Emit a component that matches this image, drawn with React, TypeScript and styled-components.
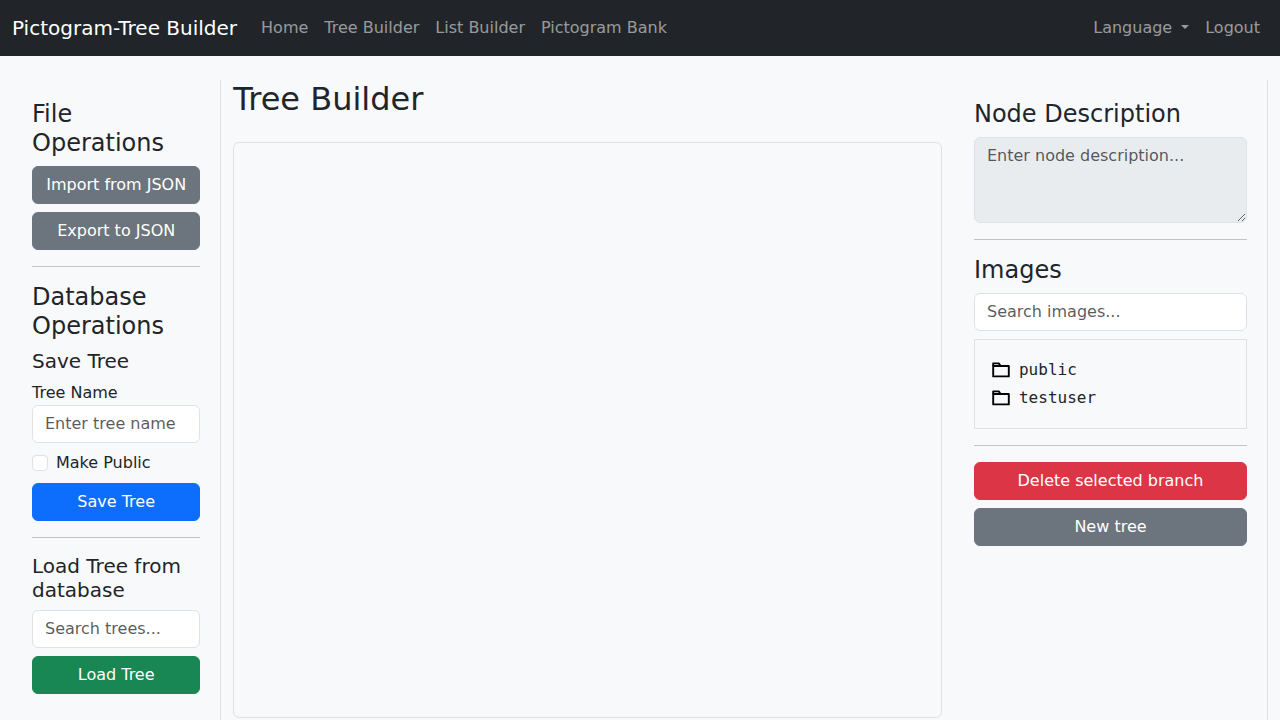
import React from "react";
import styled, { createGlobalStyle, css } from "styled-components";

const GlobalStyle = createGlobalStyle`
  *, *::before, *::after { box-sizing: border-box; }
  body {
    margin: 0;
    background: #f8f9fa;
    color: #212529;
    font-family: "DejaVu Sans", "Noto Sans", sans-serif;
    font-size: 16px;
    line-height: 24px;
  }
`;

const NavBar = styled.nav`
  display: flex;
  align-items: center;
  min-height: 56px;
  padding: 8px 12px;
  background: #212529;
`;

const Brand = styled.a`
  margin-right: 16px;
  color: #fff;
  font-size: 20px;
  line-height: 30px;
  text-decoration: none;
  white-space: nowrap;
`;

const NavList = styled.ul<{ $end?: boolean }>`
  display: flex;
  margin: 0;
  margin-left: ${(p) => (p.$end ? "auto" : "0")};
  padding: 0;
  list-style: none;
`;

const navItem = css`
  display: block;
  padding: 8px;
  color: rgba(255, 255, 255, 0.55);
  white-space: nowrap;
`;

const NavLink = styled.a`
  ${navItem}
  text-decoration: none;
`;

const NavToggle = styled.button`
  ${navItem}
  border: 0;
  background: none;
  font: inherit;
  &::after {
    content: "";
    display: inline-block;
    margin-left: 9px;
    vertical-align: 4px;
    border-top: 4px solid;
    border-right: 4px solid transparent;
    border-left: 4px solid transparent;
  }
`;

const Workspace = styled.div`
  display: grid;
  grid-template-columns: 2fr 7fr 3fr;
  min-height: calc(100vh - 80px);
  margin: 24px 12px 0;
`;

const Sidebar = styled.aside`
  min-width: 0;
  padding: 20px;
  border-right: 1px solid #dee2e6;
  overflow-y: auto;
`;

const Main = styled.main`
  min-width: 0;
  padding: 0 12px;
`;

const Title = styled.h2`
  margin: 0 0 24px;
  font-size: 32px;
  font-weight: 500;
  line-height: 38px;
`;

const SectionTitle = styled.h4`
  margin: 0 0 8px;
  font-size: 24px;
  font-weight: 500;
  line-height: 29px;
`;

const SubTitle = styled.h5`
  margin: 0 0 8px;
  font-size: 20px;
  font-weight: 500;
  line-height: 24px;
`;

const Canvas = styled.div`
  height: 80vh;
  border: 1px solid #dee2e6;
  border-radius: 6px;
`;

const Divider = styled.hr`
  margin: 16px 0;
  border: 0;
  border-top: 1px solid #212529;
  opacity: 0.25;
`;

const Stack = styled.div`
  display: flex;
  flex-direction: column;
  gap: 8px;
`;

const colors = { gray: "#6c757d", blue: "#0d6efd", green: "#198754", red: "#dc3545" };

const Button = styled.button<{ $color: keyof typeof colors }>`
  width: 100%;
  padding: 6px 12px;
  border: 1px solid ${(p) => colors[p.$color]};
  border-radius: 6px;
  background: ${(p) => colors[p.$color]};
  color: #fff;
  font: inherit;
  cursor: pointer;
`;

const field = css`
  display: block;
  width: 100%;
  padding: 6px 12px;
  border: 1px solid #dee2e6;
  border-radius: 6px;
  background: #fff;
  color: #212529;
  font: inherit;
  &::placeholder {
    color: rgba(33, 37, 41, 0.75);
    opacity: 1;
  }
`;

const TextInput = styled.input`
  ${field}
`;

const TextArea = styled.textarea`
  ${field}
  resize: vertical;
  &:disabled { background: #e9ecef; }
`;

const Label = styled.label`
  display: block;
`;

const CheckLabel = styled.label`
  display: flex;
  align-items: center;
  gap: 8px;
`;

const CheckBox = styled.input`
  flex: none;
  appearance: none;
  width: 16px;
  height: 16px;
  margin: 0;
  border: 1px solid #dee2e6;
  border-radius: 4px;
  background: #fff;
  &:checked { background: #0d6efd; }
`;

const FolderList = styled.ul`
  margin: 0;
  padding: 16px;
  border: 1px solid #dee2e6;
  list-style: none;
  font-family: "DejaVu Sans Mono", monospace;
`;

const FolderRow = styled.li`
  display: flex;
  align-items: center;
  gap: 8px;
  height: 28px;
`;

function FolderIcon() {
  return (
    <svg width="20" height="20" viewBox="0 0 20 20" fill="none" stroke="#000" strokeWidth="1.9" strokeLinejoin="round" aria-hidden="true">
      <path d="M2.2 6V3.4H7.8L9.6 6" />
      <path d="M2.2 6H17.8V16.4H2.2Z" />
    </svg>
  );
}

const navLinks = ["Home", "Tree Builder", "List Builder", "Pictogram Bank"];
const folders = ["public", "testuser"];

export default function App() {
  return (
    <>
      <GlobalStyle />
      <NavBar>
        <Brand href="#">Pictogram-Tree Builder</Brand>
        <NavList>
          {navLinks.map((name) => (
            <li key={name}><NavLink href="#">{name}</NavLink></li>
          ))}
        </NavList>
        <NavList $end>
          <li><NavToggle type="button" aria-haspopup="menu">Language</NavToggle></li>
          <li><NavLink href="#">Logout</NavLink></li>
        </NavList>
      </NavBar>
      <Workspace>
        <Sidebar>
          <SectionTitle>File Operations</SectionTitle>
          <Stack>
            <Button $color="gray" type="button">Import from JSON</Button>
            <Button $color="gray" type="button">Export to JSON</Button>
          </Stack>
          <Divider />
          <SectionTitle>Database Operations</SectionTitle>
          <SubTitle>Save Tree</SubTitle>
          <Stack>
            <div>
              <Label htmlFor="tree-name">Tree Name</Label>
              <TextInput id="tree-name" type="text" placeholder="Enter tree name" />
            </div>
            <CheckLabel>
              <CheckBox type="checkbox" />
              Make Public
            </CheckLabel>
            <Button $color="blue" type="button">Save Tree</Button>
          </Stack>
          <Divider />
          <SubTitle id="load-title">Load Tree from database</SubTitle>
          <Stack>
            <TextInput type="text" aria-labelledby="load-title" placeholder="Search trees..." />
            <Button $color="green" type="button">Load Tree</Button>
          </Stack>
        </Sidebar>
        <Main>
          <Title>Tree Builder</Title>
          <Canvas />
        </Main>
        <Sidebar>
          <SectionTitle id="description-title">Node Description</SectionTitle>
          <TextArea rows={3} disabled aria-labelledby="description-title" placeholder="Enter node description..." />
          <Divider />
          <SectionTitle id="images-title">Images</SectionTitle>
          <Stack>
            <TextInput type="text" aria-labelledby="images-title" placeholder="Search images..." />
            <FolderList>
              {folders.map((name) => (
                <FolderRow key={name}><FolderIcon />{name}</FolderRow>
              ))}
            </FolderList>
          </Stack>
          <Divider />
          <Stack>
            <Button $color="red" type="button">Delete selected branch</Button>
            <Button $color="gray" type="button">New tree</Button>
          </Stack>
        </Sidebar>
      </Workspace>
    </>
  );
}
